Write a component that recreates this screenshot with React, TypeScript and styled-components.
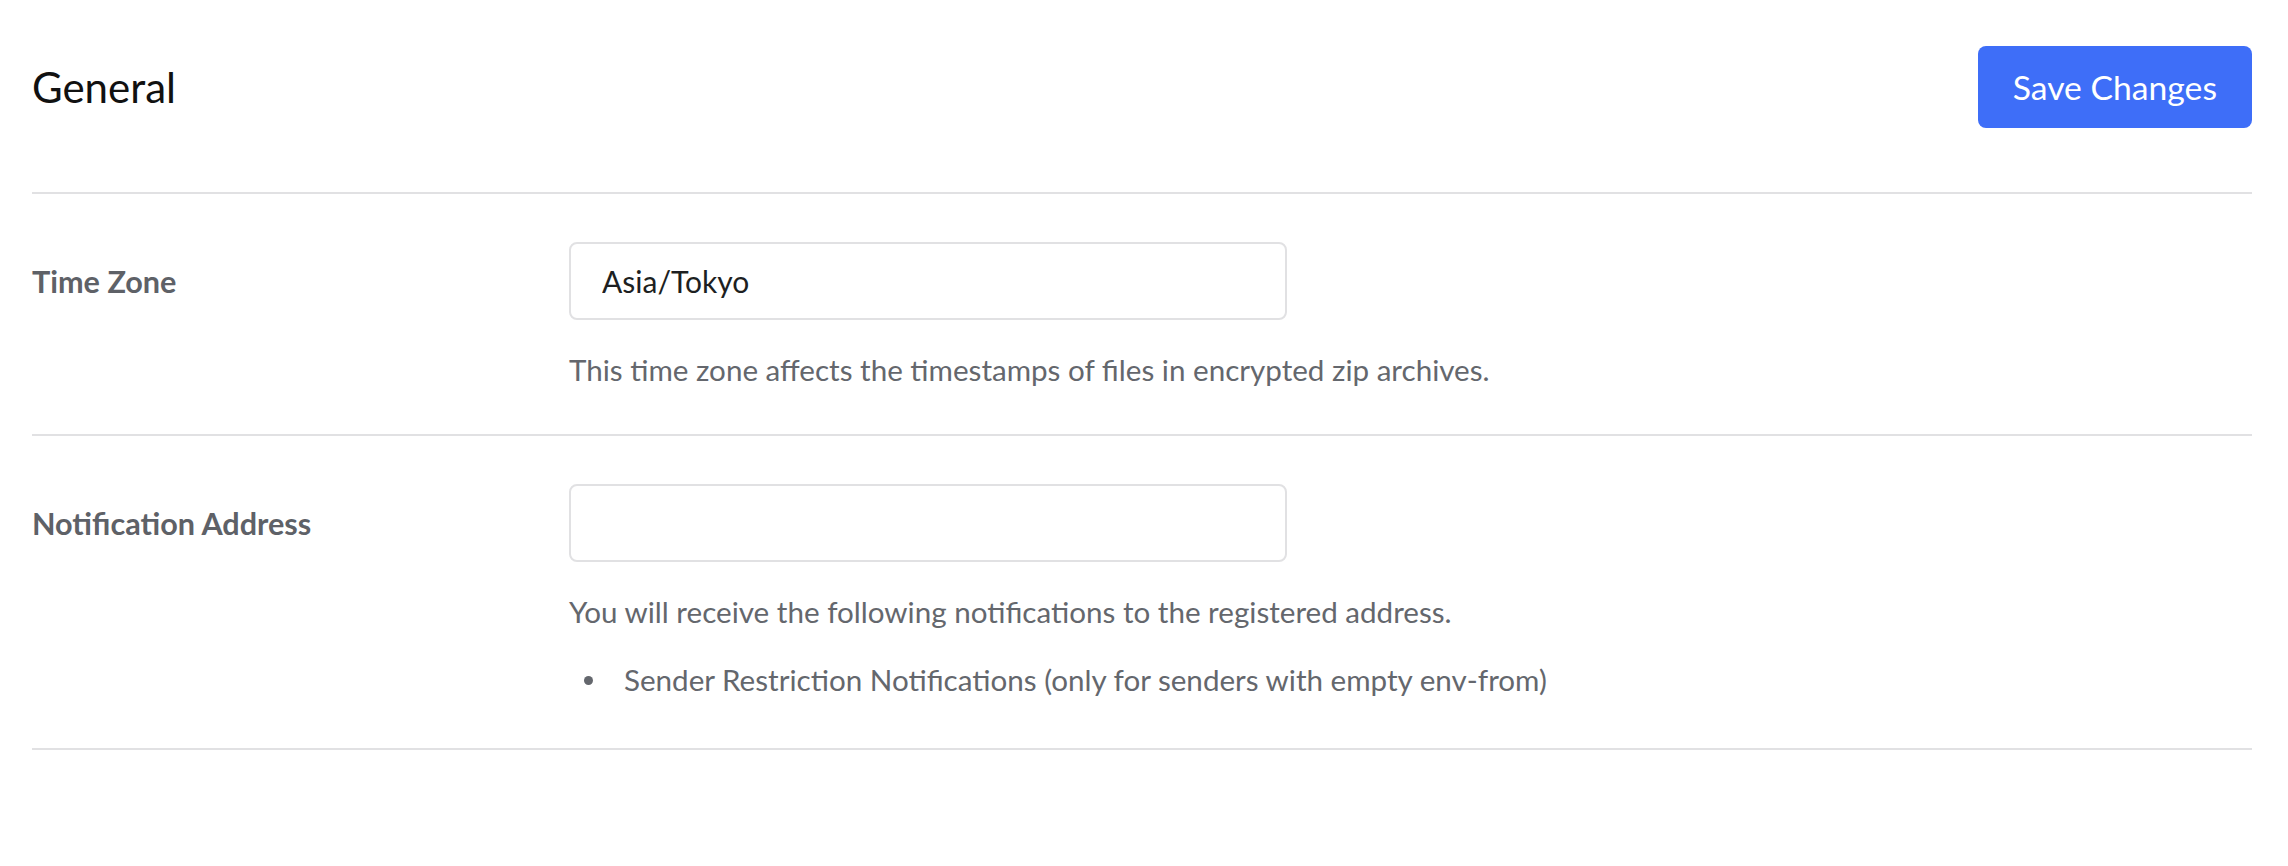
import React from "react";
import styled, {createGlobalStyle} from "styled-components";

const GlobalStyle = createGlobalStyle`
  html, body {
    margin: 0;
    padding: 0;
    background: #fff;
  }
  body {
    font-family: Lato, "Noto Sans", "Liberation Sans", sans-serif;
    -webkit-font-smoothing: antialiased;
  }
  * {
    box-sizing: border-box;
  }
`;

const Page = styled.div`
  padding: 0 36px 0 32px;
`;

const Header = styled.header`
  display: flex;
  justify-content: space-between;
  align-items: center;
  padding: 46px 0 64px;
  border-bottom: 2px solid #e1e1e3;
`;

const Title = styled.h1`
  margin: 0;
  font-size: 42px;
  line-height: 82px;
  font-weight: 400;
  color: #111;
`;

const SaveButton = styled.button`
  height: 82px;
  padding: 0 35px;
  border: none;
  border-radius: 8px;
  background: #3e6ef8;
  color: #fff;
  font-family: inherit;
  font-size: 33.7px;
  cursor: pointer;
`;

const Row = styled.section<{ $extraBottom?: number }>`
  display: grid;
  grid-template-columns: 537px 718px;
  align-items: start;
  padding: 48px 0 ${p => 41 + (p.$extraBottom || 0)}px;
  border-bottom: 2px solid #e1e1e3;
`;

const Label = styled.label`
  height: 78px;
  display: flex;
  align-items: center;
  font-size: 30.6px;
  font-weight: 700;
  color: #5e6167;
`;

const Field = styled.div`
  display: flex;
  flex-direction: column;
`;

const Input = styled.input`
  width: 718px;
  height: 78px;
  padding: 0 31px;
  border: 2px solid #e1e1e3;
  border-radius: 8px;
  font-family: inherit;
  font-size: 30px;
  color: #1d1f22;
  outline: none;
`;

const Help = styled.p`
  margin: 27px 0 0;
  font-size: 29.6px;
  line-height: 46px;
  color: #64676d;
  white-space: nowrap;
`;

const List = styled.ul`
  list-style: none;
  margin: 22px 0 0;
  padding: 0;
`;

const Item = styled.li`
  display: flex;
  align-items: center;
  font-size: 29.6px;
  line-height: 46px;
  color: #64676d;
  white-space: nowrap;
`;

const Dot = styled.span`
  flex: none;
  width: 9px;
  height: 9px;
  margin: 0 31px 0 15px;
  border-radius: 50%;
  background: #64676d;
`;

export default function App() {
    return (
        <Page>
            <GlobalStyle/>
            <Header>
                <Title>General</Title>
                <SaveButton>Save Changes</SaveButton>
            </Header>
            <Row>
                <Label htmlFor="tz">Time Zone</Label>
                <Field>
                    <Input id="tz" defaultValue="Asia/Tokyo"/>
                    <Help>This time zone affects the timestamps of files in encrypted zip archives.</Help>
                </Field>
            </Row>
            <Row $extraBottom={4}>
                <Label htmlFor="addr">Notification Address</Label>
                <Field>
                    <Input id="addr" defaultValue=""/>
                    <Help>You will receive the following notifications to the registered address.</Help>
                    <List>
                        <Item><Dot/>Sender Restriction Notifications (only for senders with empty env-from)</Item>
                    </List>
                </Field>
            </Row>
        </Page>
    );
}
